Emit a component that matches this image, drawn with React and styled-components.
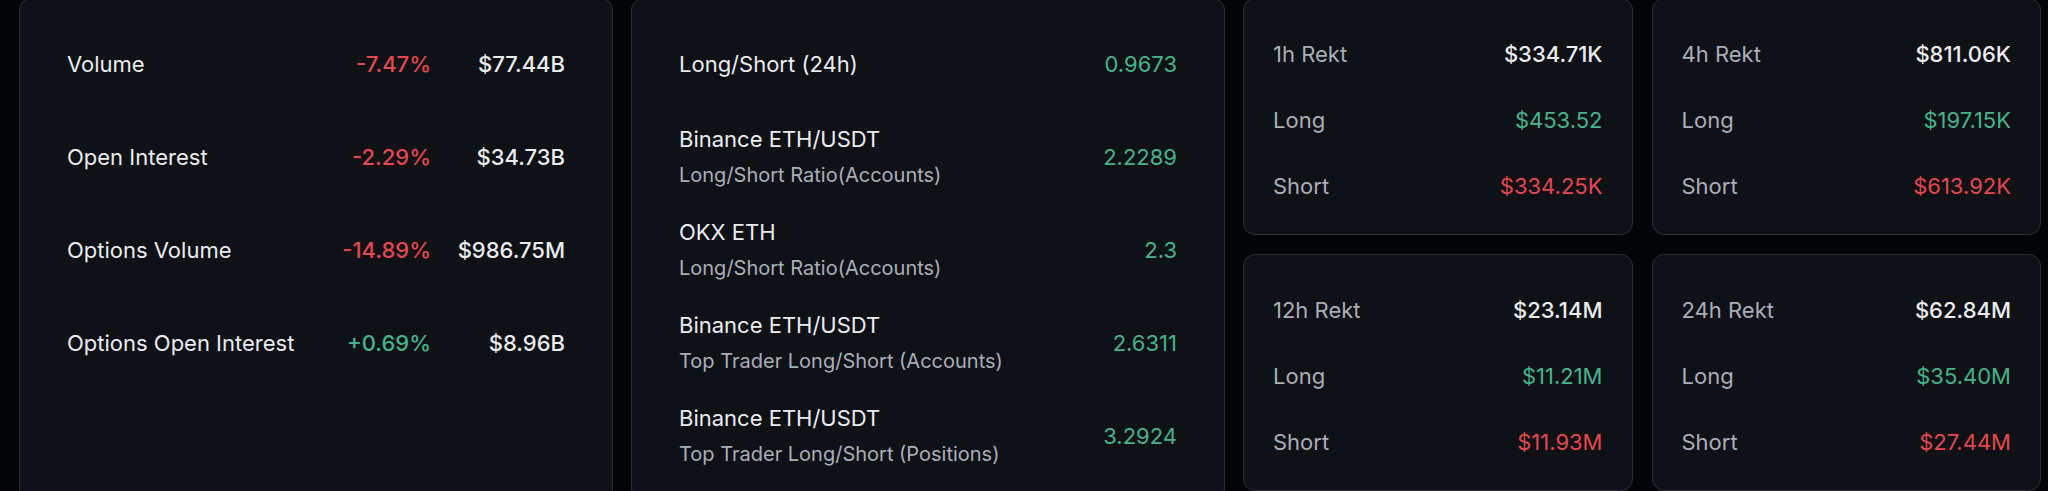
import React from "react";
import styled, { createGlobalStyle } from "styled-components";

const GlobalStyle = createGlobalStyle`
  html, body {
    margin: 0;
    padding: 0;
    background: #030406;
    overflow: hidden;
  }
  body {
    font-family: Inter, "Noto Sans", Roboto, sans-serif;
    color: #eaecef;
    -webkit-font-smoothing: antialiased;
  }
`;

const Page = styled.div`
  display: grid;
  grid-template-columns: 594px 594px 798px;
  column-gap: 18px;
  align-items: start;
  padding: 0 7px 0 19px;
  margin-top: -2px;
`;

const Panel = styled.section`
  box-sizing: border-box;
  background: #0e1116;
  border: 1px solid #2b2f36;
  border-radius: 12px;
`;

const BigPanel = styled(Panel)`
  padding: 18px 47px;
  align-self: stretch;
`;

const BigRow = styled.div`
  display: flex;
  align-items: center;
  height: 93px;
`;

const Label = styled.div`
  flex: 1;
  font-size: 22px;
  line-height: 30px;
  font-weight: 400;
  color: ${(p) => (p.$muted ? "#a9afb7" : "#eaecef")};
  white-space: nowrap;
`;

const Change = styled.div`
  font-size: 22px;
  line-height: 30px;
  font-weight: 500;
  text-align: right;
  color: ${(p) => (p.$up ? "#45b48e" : "#e5474f")};
`;

const Value = styled.div`
  width: ${(p) => (p.$w ? `${p.$w}px` : "auto")};
  font-size: 22px;
  line-height: 30px;
  font-weight: ${(p) => (p.$tone ? 400 : 500)};
  text-align: right;
  white-space: nowrap;
  color: ${(p) =>
    p.$tone === "up" ? "#45b48e" : p.$tone === "down" ? "#e5474f" : "#eaecef"};
`;

const Stack = styled.div`
  flex: 1;
  display: flex;
  flex-direction: column;
  gap: 6px;
`;

const SubLabel = styled.div`
  font-size: 20px;
  line-height: 30px;
  color: #a9afb7;
  white-space: nowrap;
`;

const RektGrid = styled.div`
  display: grid;
  grid-template-columns: 1fr 1fr;
  grid-template-rows: 237px 237px;
  gap: 19px;
`;

const RektPanel = styled(Panel)`
  padding: 22px 29px 14px;
  display: flex;
  flex-direction: column;
`;

const RektRow = styled.div`
  display: flex;
  align-items: center;
  justify-content: space-between;
  height: 66px;
`;

const marketRows = [
  { label: "Volume", change: "-7.47%", up: false, value: "$77.44B" },
  { label: "Open Interest", change: "-2.29%", up: false, value: "$34.73B" },
  { label: "Options Volume", change: "-14.89%", up: false, value: "$986.75M" },
  { label: "Options Open Interest", change: "+0.69%", up: true, value: "$8.96B" },
];

const ratioRows = [
  { title: "Long/Short (24h)", value: "0.9673" },
  { title: "Binance ETH/USDT", sub: "Long/Short Ratio(Accounts)", value: "2.2289" },
  { title: "OKX ETH", sub: "Long/Short Ratio(Accounts)", value: "2.3" },
  { title: "Binance ETH/USDT", sub: "Top Trader Long/Short (Accounts)", value: "2.6311" },
  { title: "Binance ETH/USDT", sub: "Top Trader Long/Short (Positions)", value: "3.2924" },
];

const rekt = [
  { period: "1h Rekt", total: "$334.71K", long: "$453.52", short: "$334.25K" },
  { period: "4h Rekt", total: "$811.06K", long: "$197.15K", short: "$613.92K" },
  { period: "12h Rekt", total: "$23.14M", long: "$11.21M", short: "$11.93M" },
  { period: "24h Rekt", total: "$62.84M", long: "$35.40M", short: "$27.44M" },
];

export default function App() {
  return (
    <>
      <GlobalStyle />
      <Page>
        <BigPanel>
          {marketRows.map((r) => (
            <BigRow key={r.label}>
              <Label>{r.label}</Label>
              <Change $up={r.up}>{r.change}</Change>
              <Value $w={134}>{r.value}</Value>
            </BigRow>
          ))}
        </BigPanel>
        <BigPanel>
          {ratioRows.map((r, i) => (
            <BigRow key={i}>
              {r.sub ? (
                <Stack>
                  <Label>{r.title}</Label>
                  <SubLabel>{r.sub}</SubLabel>
                </Stack>
              ) : (
                <Label>{r.title}</Label>
              )}
              <Value $tone="up">{r.value}</Value>
            </BigRow>
          ))}
        </BigPanel>
        <RektGrid>
          {rekt.map((r) => (
            <RektPanel key={r.period}>
              <RektRow>
                <Label $muted>{r.period}</Label>
                <Value>{r.total}</Value>
              </RektRow>
              <RektRow>
                <Label $muted>Long</Label>
                <Value $tone="up">{r.long}</Value>
              </RektRow>
              <RektRow>
                <Label $muted>Short</Label>
                <Value $tone="down">{r.short}</Value>
              </RektRow>
            </RektPanel>
          ))}
        </RektGrid>
      </Page>
    </>
  );
}
